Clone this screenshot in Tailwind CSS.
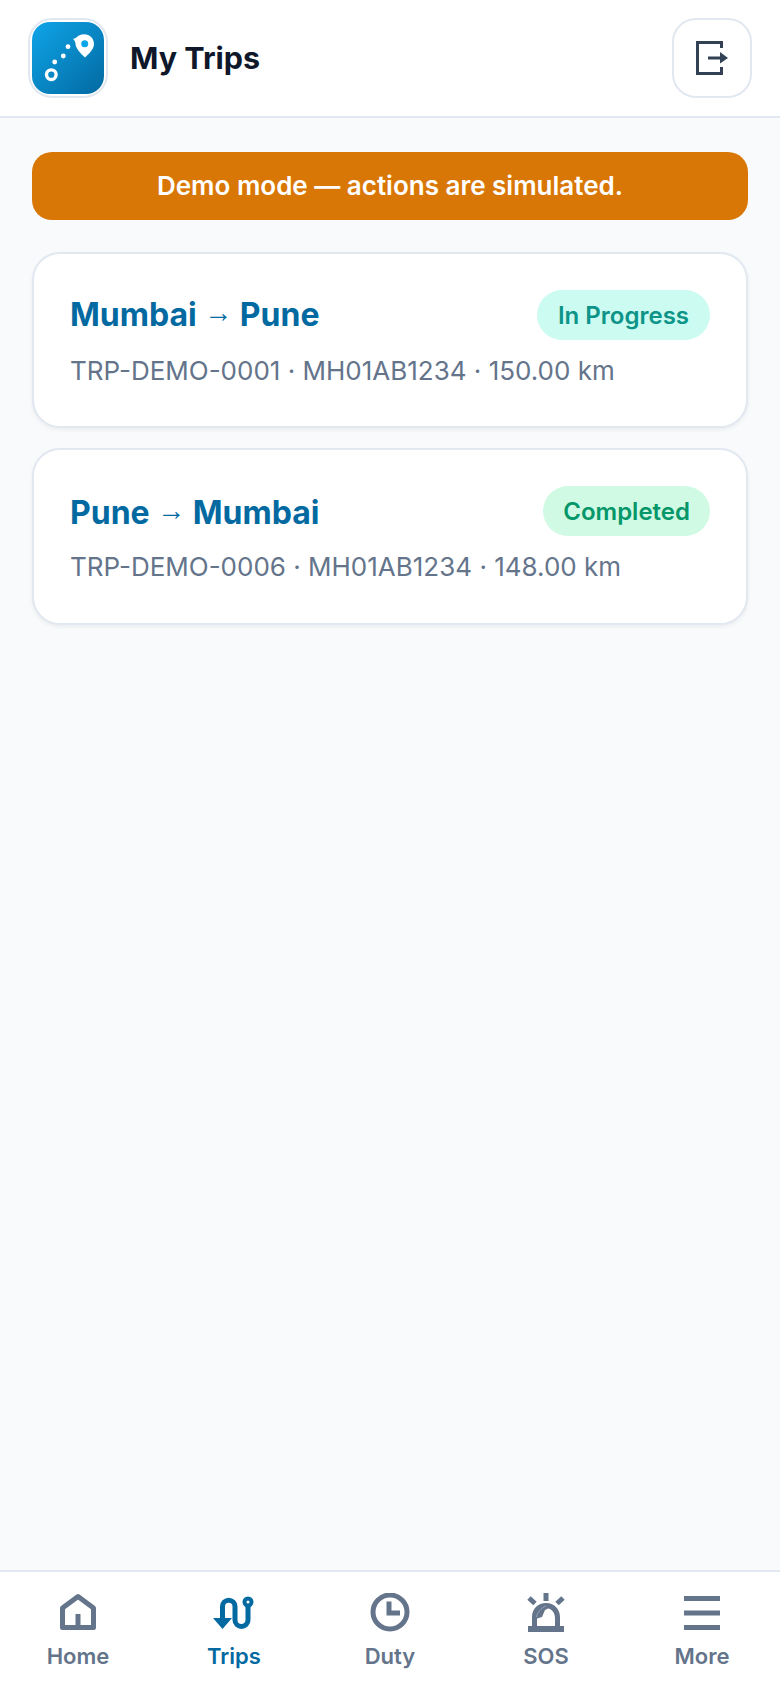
<!DOCTYPE html>
<html lang="en">
<head>
<meta charset="utf-8">
<script src="https://cdn.jsdelivr.net/npm/@tailwindcss/browser@4"></script>
</head>
<body class="m-0 bg-[#f8fafc] font-['Inter',sans-serif]">
<div class="flex h-[1688px] w-[780px] flex-col">
  <header class="flex h-[118px] shrink-0 items-center justify-between border-b-2 border-[#e2e8f0] bg-white pr-[28px] pl-[28px]">
    <div class="flex items-center gap-[22px]">
      <div class="h-[80px] w-[80px] rounded-[24px] border-2 border-[#e2e8f0] p-[2px]">
        <svg viewBox="0 0 72 72" class="block h-[72px] w-[72px]">
          <defs><linearGradient id="g" x1="0" y1="0" x2="1" y2="1"><stop offset="0" stop-color="#0ea5e9"/><stop offset="1" stop-color="#0369a1"/></linearGradient></defs>
          <rect width="72" height="72" rx="18" fill="url(#g)"/>
          <circle cx="19.300" cy="52.700" r="4.800" fill="none" stroke="#fff" stroke-width="3.400"/>
          <circle cx="22.700" cy="40" r="2.400" fill="#fff"/><circle cx="31.300" cy="34" r="2.400" fill="#fff"/><circle cx="36" cy="24.700" r="2.400" fill="#fff"/>
          <path d="M41 17C43 16.500 45 15 47 13.500 54 10 62 14 62 22 62 27 57 32 53 35.500 49 32 43.500 26 43.500 22 43.500 20 42.500 18 41 17z" fill="#fff"/>
          <circle cx="52.700" cy="21.700" r="3.500" fill="#0ea5e9"/>
        </svg>
      </div>
      <h1 class="text-[30.500px] leading-[36px] font-bold text-[#0f172a]">My Trips</h1>
    </div>
    <button class="flex h-[80px] w-[80px] items-center justify-center rounded-[24px] border-2 border-[#e2e8f0] bg-white">
      <svg viewBox="0 0 32 34" class="h-[34px] w-[32px]" fill="none">
        <path d="M25.500 7V1.500H1.500v31h24V26" stroke="#334155" stroke-width="3"/>
        <path d="M12 17h13" stroke="#334155" stroke-width="3"/>
        <path d="M24 11 32 17 24 22.500z" fill="#334155"/>
      </svg>
    </button>
  </header>

  <main class="flex flex-1 flex-col px-[32px] pt-[34px]">
    <div class="flex h-[68px] items-center justify-center rounded-[20px] bg-[#d97706] pb-[2px] text-[26px] font-semibold text-white">Demo mode — actions are simulated.</div>

    <div class="mt-[32px] flex h-[176.400px] flex-col rounded-[28px] border-2 border-[#e2e8f0] bg-white px-[36px] pt-[36px] shadow-[0_2px_4px_rgba(15,23,42,0.06)]">
      <div class="flex h-[50px] items-center justify-between">
        <span class="text-[32px] font-bold text-[#0369a1]">Mumbai <span class="align-[4px] font-['Liberation_Sans'] text-[28px] leading-none font-normal">→</span> Pune</span>
        <span class="flex h-[50px] items-center rounded-full bg-[#ccfbf1] px-[21px] pt-[1px] text-[24px] font-semibold text-[#0d9488]">In Progress</span>
      </div>
      <p class="mt-[15px] text-[26px] leading-[32px] text-[#64748b]">TRP-DEMO-0001 · MH01AB1234 · 150.00 km</p>
    </div>

    <div class="mt-[20px] flex h-[176.400px] flex-col rounded-[28px] border-2 border-[#e2e8f0] bg-white px-[36px] pt-[36px] shadow-[0_2px_4px_rgba(15,23,42,0.06)]">
      <div class="flex h-[50px] items-center justify-between">
        <span class="pt-[3px] text-[32px] font-bold text-[#0369a1]">Pune <span class="align-[4px] font-['Liberation_Sans'] text-[28px] leading-none font-normal">→</span> Mumbai</span>
        <span class="flex h-[50px] items-center rounded-full bg-[#d1fae5] px-[20px] pt-[1px] text-[24px] font-semibold text-[#059669]">Completed</span>
      </div>
      <p class="mt-[15px] text-[26px] leading-[32px] text-[#64748b]">TRP-DEMO-0006 · MH01AB1234 · 148.00 km</p>
    </div>
  </main>

  <nav class="grid h-[118px] shrink-0 grid-cols-5 border-t-2 border-[#e2e8f0] bg-white">
    <div class="flex flex-col items-center pt-[21px] text-[#64748b]">
      <svg viewBox="0 0 40 40" class="h-[40px] w-[40px]" fill="none" stroke="currentColor" stroke-width="5" stroke-linejoin="round"><path d="M4.500 15 20 3.500 35.500 15v19.500h-31z"/><path d="M20 34V21"/></svg>
      <span class="mt-[9px] text-[22px] leading-[28px] font-semibold">Home</span>
    </div>
    <div class="flex flex-col items-center pt-[21px] text-[#0369a1]">
      <svg viewBox="0 0 40 40" class="h-[40px] w-[40px] overflow-visible" fill="none" stroke="currentColor" stroke-width="5"><path d="M8.500 26V13.500a6.250 6.250 0 0 1 12.500 0V27a6.500 6.500 0 0 0 13 0V13"/><path d="M-1 25h19L8.500 36z" fill="currentColor" stroke="none"/><circle cx="34" cy="9" r="3.500" fill="#fff" stroke-width="4"/></svg>
      <span class="mt-[9px] text-[22px] leading-[28px] font-semibold">Trips</span>
    </div>
    <div class="flex flex-col items-center pt-[21px] text-[#64748b]">
      <svg viewBox="0 0 40 40" class="h-[40px] w-[40px]" fill="none" stroke="currentColor" stroke-width="5"><circle cx="20" cy="19" r="17"/><path d="M19 8.500V20h11"/></svg>
      <span class="mt-[9px] text-[22px] leading-[28px] font-semibold">Duty</span>
    </div>
    <div class="flex flex-col items-center pt-[21px] text-[#64748b]">
      <svg viewBox="0 0 40 40" class="h-[40px] w-[40px]">
        <path d="M2 33h36v6H2zM20 10C12 10 6 16 6 24v9h28v-9C34 16 28 10 20 10z" fill="#64748b"/>
        <path d="M11 33V25.500L16 24 19 17 22 15.500C26 16 29 20 29 25V33z" fill="#fff"/>
        <path d="M10.500 24C11 20 15 15 20 13" fill="none" stroke="#94a3b8"/>
        <path d="M20 0V8M3 5 9 10.500M37 5 31 10.500" fill="none" stroke="#64748b" stroke-width="5"/>
      </svg>
      <span class="mt-[9px] text-[22px] leading-[28px] font-semibold">SOS</span>
    </div>
    <div class="flex flex-col items-center pt-[21px] text-[#64748b]">
      <svg viewBox="0 0 40 40" class="h-[40px] w-[40px]" fill="currentColor"><rect x="2" y="3" width="36" height="5"/><rect x="2" y="17.500" width="36" height="5"/><rect x="2" y="32" width="36" height="5"/></svg>
      <span class="mt-[9px] text-[22px] leading-[28px] font-semibold">More</span>
    </div>
  </nav>
</div>
</body>
</html>
